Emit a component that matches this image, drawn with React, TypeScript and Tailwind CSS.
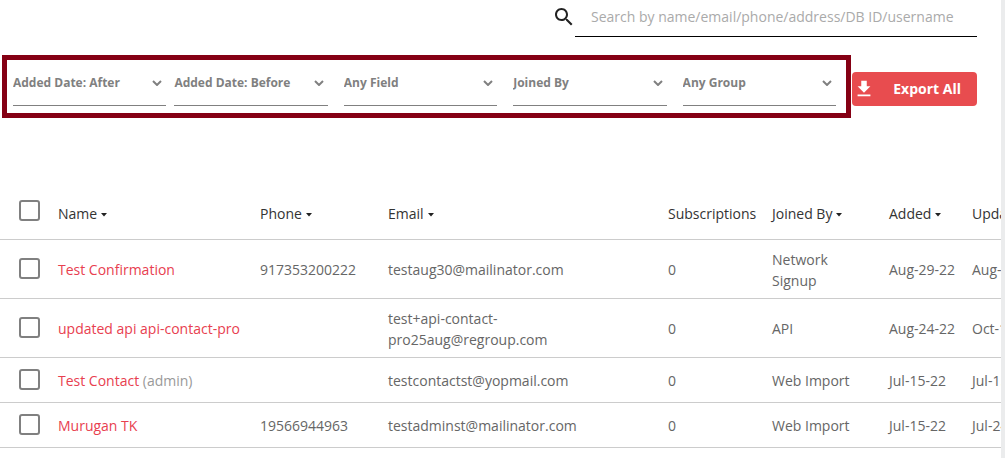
import React, { useState } from 'react';

interface Contact {
    id: number;
    name: string;
    role?: string;
    phone: string;
    email: string;
    subscriptions: number;
    joinedBy: string;
    added: string;
    updated: string;
}

const contacts: Contact[] = [
    { id: 1, name: 'Test Confirmation', phone: '917353200222', email: 'testaug30@mailinator.com', subscriptions: 0, joinedBy: 'Network Signup', added: 'Aug-29-22', updated: 'Aug-29-22' },
    { id: 2, name: 'updated api api-contact-pro', phone: '', email: 'test+api-contact-pro25aug@regroup.com', subscriptions: 0, joinedBy: 'API', added: 'Aug-24-22', updated: 'Oct-12-22' },
    { id: 3, name: 'Test Contact', role: '(admin)', phone: '', email: 'testcontactst@yopmail.com', subscriptions: 0, joinedBy: 'Web Import', added: 'Jul-15-22', updated: 'Jul-15-22' },
    { id: 4, name: 'Murugan TK', phone: '19566944963', email: 'testadminst@mailinator.com', subscriptions: 0, joinedBy: 'Web Import', added: 'Jul-15-22', updated: 'Jul-24-22' },
];

const columns = [
    { label: 'Name', sortable: true },
    { label: 'Phone', sortable: true },
    { label: 'Email', sortable: true },
    { label: 'Subscriptions', sortable: false },
    { label: 'Joined By', sortable: true },
    { label: 'Added', sortable: true },
    { label: 'Updated', sortable: true },
];

const FilterSelect: React.FC<{ label: string }> = ({ label }) => (
    <div className="grid min-w-0 flex-1">
        <select
            aria-label={label}
            className="col-start-1 row-start-1 h-[46px] w-full appearance-none border-b border-[#808080] bg-transparent text-xs font-bold text-[#808080] outline-none"
        >
            <option>{label}</option>
        </select>
        <svg viewBox="0 0 10 6" className="pointer-events-none col-start-1 row-start-1 mr-1 h-1.5 w-2.5 self-center justify-self-end fill-none stroke-[#808080] stroke-2">
            <path d="M1 1l4 4 4-4" />
        </svg>
    </div>
);

interface CheckboxProps {
    label: string;
    checked: boolean;
    onChange: () => void;
}

const Checkbox: React.FC<CheckboxProps> = ({ label, checked, onChange }) => (
    <input
        type="checkbox"
        aria-label={label}
        checked={checked}
        onChange={onChange}
        className="block size-[21px] appearance-none rounded-[3px] border-2 border-[#808080] bg-white checked:bg-[#e84c4f]"
    />
);

export default function App() {
    const [search, setSearch] = useState('');
    const [selected, setSelected] = useState<number[]>([]);

    const allSelected = selected.length === contacts.length;

    const toggle = (id: number) => {
        setSelected(selected.includes(id) ? selected.filter(s => s !== id) : [...selected, id]);
    };

    return (
        <div className="min-h-screen overflow-hidden border-r-4 border-[#ebeced] bg-white font-['Open_Sans',sans-serif] text-sm text-[#666]">
            <div className="flex justify-end pr-6">
                <label htmlFor="search" className="pt-[5px]">
                    <svg viewBox="0 0 24 24" className="-mr-px size-6 fill-[#222]">
                        <path d="M15.5 14h-.79l-.28-.27C15.41 12.59 16 11.11 16 9.5 16 5.91 13.09 3 9.5 3S3 5.91 3 9.5 5.91 16 9.5 16c1.61 0 3.09-.59 4.23-1.57l.27.28v.79l5 4.99L20.49 19l-4.99-5zm-6 0C7.01 14 5 11.99 5 9.5S7.01 5 9.5 5 14 7.01 14 9.5 11.99 14 9.5 14z" />
                    </svg>
                </label>
                <input
                    id="search"
                    type="text"
                    value={search}
                    onChange={(e) => setSearch(e.target.value)}
                    placeholder="Search by name/email/phone/address/DB ID/username"
                    className="h-[37px] w-[402px] border-b border-black pr-2 pb-1 pl-4 outline-none placeholder:text-[#aaa]"
                />
            </div>

            <div className="flex items-start pt-[18px] pr-6 pl-0.5">
                <div className="mr-px flex min-w-0 flex-1 gap-4 border-5 border-[#850014] pr-2.5 pb-[7px] pl-1.5">
                    <div className="flex flex-[2_1_8px] gap-2">
                        <FilterSelect label="Added Date: After" />
                        <FilterSelect label="Added Date: Before" />
                    </div>
                    <FilterSelect label="Any Field" />
                    <FilterSelect label="Joined By" />
                    <FilterSelect label="Any Group" />
                </div>
                <button type="button" className="mt-[17px] flex h-[34px] w-[125px] items-center justify-between rounded bg-[#e84c4f] pr-4 pl-px font-bold text-white">
                    <svg viewBox="0 0 24 24" className="size-[22px] fill-current">
                        <path d="M19 9h-4V3H9v6H5l7 7 7-7zM5 18v2h14v-2H5z" />
                    </svg>
                    Export All
                </button>
            </div>

            <div className="mt-[73px] overflow-hidden">
                <table className="w-full min-w-[1048px] table-fixed border-collapse text-left leading-[21px]">
                    <colgroup>
                        <col className="w-[50px]" />
                        <col className="w-[202px]" />
                        <col className="w-[128px]" />
                        <col />
                        <col className="w-[104px]" />
                        <col className="w-[117px]" />
                        <col className="w-[83px]" />
                        <col className="w-[84px]" />
                    </colgroup>
                    <thead>
                        <tr className="h-12 border-b border-[#ccc] align-bottom text-[#333]">
                            <th className="pb-[18px] pl-[19px]">
                                <Checkbox
                                    label="Select all"
                                    checked={allSelected}
                                    onChange={() => setSelected(allSelected ? [] : contacts.map(c => c.id))}
                                />
                            </th>
                            {columns.map(col => (
                                <th key={col.label} className="px-2 pb-[15px] font-normal whitespace-nowrap">
                                    {col.sortable ? (
                                        <button type="button" className="flex items-center gap-1">
                                            {col.label}
                                            <svg viewBox="0 0 6 4" className="mt-1 h-1 w-1.5 fill-[#222]">
                                                <path d="M0 0h6L3 3.6z" />
                                            </svg>
                                        </button>
                                    ) : col.label}
                                </th>
                            ))}
                        </tr>
                    </thead>
                    <tbody>
                        {contacts.map(contact => (
                            <tr key={contact.id} className="h-[45px] border-b border-[#ccc]">
                                <td className="pl-[19px]">
                                    <Checkbox
                                        label={`Select ${contact.name}`}
                                        checked={selected.includes(contact.id)}
                                        onChange={() => toggle(contact.id)}
                                    />
                                </td>
                                <td className="px-2 pt-[9px] pb-[7px] whitespace-nowrap">
                                    <a href="#contact" className="text-[#e8404f]">{contact.name}</a>
                                    {contact.role && <span className="text-[#999]"> {contact.role}</span>}
                                </td>
                                <td className="px-2 pt-[9px] pb-[7px]">{contact.phone}</td>
                                <td className="pt-[9px] pr-10 pb-[7px] pl-2">{contact.email}</td>
                                <td className="px-2 pt-[9px] pb-[7px]">{contact.subscriptions}</td>
                                <td className="pt-[9px] pr-4 pb-[7px] pl-2">{contact.joinedBy}</td>
                                <td className="px-2 pt-[9px] pb-[7px] whitespace-nowrap">{contact.added}</td>
                                <td className="px-2 pt-[9px] pb-[7px] whitespace-nowrap">{contact.updated}</td>
                            </tr>
                        ))}
                    </tbody>
                </table>
            </div>
        </div>
    );
}
